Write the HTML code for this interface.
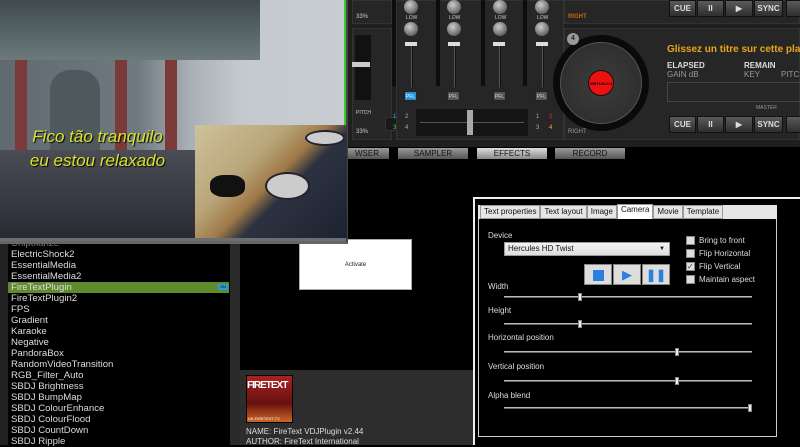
<!DOCTYPE html><html><head><meta charset="utf-8"><style>
*{margin:0;padding:0;box-sizing:border-box}
body{width:800px;height:445px;overflow:hidden;background:#000;position:relative;font-family:"Liberation Sans",sans-serif}
.a{position:absolute}
.list div{height:11px;font-size:9.6px;line-height:11px;color:#ddd;padding-left:3px;white-space:nowrap}
.btn{position:absolute;height:17px;background:linear-gradient(#5a5a5a,#2e2e2e);border:1px solid #111;color:#ddd;font-size:8px;font-weight:bold;text-align:center;line-height:15px}
.knob{position:absolute;width:14px;height:14px;border-radius:50%;background:radial-gradient(circle at 40% 35%,#ccc,#666 70%,#333)}
.fad{position:absolute;width:2px;background:#111;border-left:1px solid #555}
.cap{position:absolute;width:12px;height:4px;background:#ddd}
.pfl{position:absolute;width:13px;height:10px;background:#555;color:#ddd;font-size:5px;line-height:10px;text-align:center;border:1px solid #222}
.lbl{position:absolute;font-size:5px;color:#ccc}
.tab{position:absolute;top:148px;height:11px;background:linear-gradient(#9a9a9a,#555);color:#111;font-size:8px;text-align:center;line-height:11px}
.dl{position:absolute;font-size:8px;color:#ddd}
.sl{position:absolute;left:504px;width:248px;height:2px;background:#bbb;border-bottom:1px solid #666}
.th{position:absolute;width:4px;height:8px;background:#eee;border:1px solid #888;top:-3px}
.cb{position:absolute;left:686px;width:9px;height:9px;background:#ddd;border:1px solid #888}
.dt{position:absolute;font-size:8px;color:#ddd}
</style></head><body>
<div class="a" style="left:345px;top:0;width:455px;height:147px;background:#1f1f1f"></div>
<div class="a" style="left:352px;top:0;width:40px;height:24px;background:#262626;border:1px solid #333"></div>
<div class="a" style="left:352px;top:28px;width:40px;height:112px;background:#262626;border:1px solid #333"></div>
<div class="a" style="left:356px;top:14px;font-size:6px;color:#ccc">33%</div>
<div class="a" style="left:356px;top:129px;font-size:6px;color:#ccc">33%</div>
<div class="a" style="left:356px;top:110px;font-size:5px;color:#ccc">PITCH</div>
<div class="a" style="left:355px;top:35px;width:16px;height:65px;background:#111"></div>
<div class="a" style="left:352px;top:62px;width:18px;height:5px;background:#ccc"></div>
<div class="a" style="left:385px;top:117px;width:28px;height:14px;background:#1a1a1a;border:1px solid #333"></div>
<div class="a" style="left:396px;top:0;width:168px;height:140px;background:#262626;border:1px solid #333"></div>
<div class="a" style="left:564px;top:0;width:236px;height:24px;background:#262626;border:1px solid #333"></div>
<div class="a" style="left:564px;top:28px;width:236px;height:112px;background:#262626;border:1px solid #333"></div>
<div class="knob" style="left:404px;top:0"></div><div class="knob" style="left:447px;top:0"></div><div class="knob" style="left:493px;top:0"></div><div class="knob" style="left:535px;top:0"></div>
<div class="lbl" style="left:406px;top:15px">LOW</div><div class="lbl" style="left:449px;top:15px">LOW</div><div class="lbl" style="left:495px;top:15px">LOW</div><div class="lbl" style="left:537px;top:15px">LOW</div>
<div class="knob" style="left:404px;top:22px"></div><div class="knob" style="left:447px;top:22px"></div><div class="knob" style="left:493px;top:22px"></div><div class="knob" style="left:535px;top:22px"></div>
<div class="fad" style="left:411px;top:45px;height:42px"></div><div class="fad" style="left:454px;top:45px;height:42px"></div><div class="fad" style="left:499px;top:45px;height:42px"></div><div class="fad" style="left:542px;top:45px;height:42px"></div>
<div class="cap" style="left:405px;top:42px"></div><div class="cap" style="left:448px;top:42px"></div><div class="cap" style="left:493px;top:42px"></div><div class="cap" style="left:536px;top:42px"></div>
<div class="a" style="left:392px;top:0;width:4px;height:86px;background:#0d0d0d"></div><div class="a" style="left:436px;top:0;width:4px;height:86px;background:#0d0d0d"></div><div class="a" style="left:481px;top:0;width:4px;height:86px;background:#0d0d0d"></div><div class="a" style="left:523px;top:0;width:4px;height:86px;background:#0d0d0d"></div>
<div class="pfl" style="left:404px;top:91px;background:#2a8fd8;color:#fff">PFL</div><div class="pfl" style="left:447px;top:91px">PFL</div><div class="pfl" style="left:493px;top:91px">PFL</div><div class="pfl" style="left:535px;top:91px">PFL</div>
<div class="a" style="left:416px;top:109px;width:112px;height:27px;background:#151515"></div>
<div class="a" style="left:420px;top:122px;width:104px;height:1px;background:#555"></div>
<div class="a" style="left:467px;top:110px;width:6px;height:25px;background:#aaa"></div>
<div class="a" style="left:393px;top:114px;font-size:6px;color:#3af">1</div><div class="a" style="left:405px;top:114px;font-size:6px;color:#aaa">2</div>
<div class="a" style="left:393px;top:125px;font-size:6px;color:#3d3">3</div><div class="a" style="left:405px;top:125px;font-size:6px;color:#aaa">4</div>
<div class="a" style="left:536px;top:114px;font-size:6px;color:#aaa">1</div><div class="a" style="left:549px;top:114px;font-size:6px;color:#f22">2</div>
<div class="a" style="left:536px;top:125px;font-size:6px;color:#aaa">3</div><div class="a" style="left:549px;top:125px;font-size:6px;color:#fa3">4</div>
<div class="a" style="left:568px;top:14px;font-size:6px;color:#c60;font-weight:bold">RIGHT</div>
<div class="a" style="left:568px;top:129px;font-size:6px;color:#999">RIGHT</div>
<div class="a" style="left:553px;top:35px;width:96px;height:96px;border-radius:50%;background:#0a0a0a"></div>
<div class="a" style="left:560px;top:42px;width:82px;height:82px;border-radius:50%;background:radial-gradient(#3c3c3c,#2a2a2a);border:1px solid #555"></div>
<div class="a" style="left:567px;top:33px;width:12px;height:12px;border-radius:50%;background:#999;color:#222;font-size:7px;font-weight:bold;text-align:center;line-height:12px">4</div>
<div class="a" style="left:588px;top:70px;width:26px;height:26px;border-radius:50%;background:#e11;border:1px solid #111;font-size:4px;color:#000;text-align:center;line-height:26px;font-weight:bold">VIRTUALDJ</div>
<div class="a" style="left:667px;top:44px;font-size:10px;color:#e9a51a;font-weight:bold;white-space:nowrap">Glissez un titre sur cette plat</div>
<div class="a" style="left:667px;top:61px;font-size:8px;color:#ddd;font-weight:bold">ELAPSED</div>
<div class="a" style="left:744px;top:61px;font-size:8px;color:#ddd;font-weight:bold">REMAIN</div>
<div class="a" style="left:667px;top:70px;font-size:8px;color:#999">GAIN dB</div>
<div class="a" style="left:744px;top:70px;font-size:8px;color:#999">KEY</div>
<div class="a" style="left:781px;top:70px;font-size:8px;color:#999">PITC</div>
<div class="a" style="left:667px;top:82px;width:140px;height:20px;border:1px solid #444"></div>
<div class="a" style="left:756px;top:105px;font-size:5px;color:#999">MASTER</div>
<div class="btn" style="left:669px;top:0;width:27px">CUE</div><div class="btn" style="left:697px;top:0;width:27px">II</div><div class="btn" style="left:725px;top:0;width:28px">▶</div><div class="btn" style="left:754px;top:0;width:29px">SYNC</div><div class="btn" style="left:786px;top:0;width:20px"></div>
<div class="btn" style="left:669px;top:116px;width:27px">CUE</div><div class="btn" style="left:697px;top:116px;width:27px">II</div><div class="btn" style="left:725px;top:116px;width:28px">▶</div><div class="btn" style="left:754px;top:116px;width:29px">SYNC</div><div class="btn" style="left:786px;top:116px;width:20px"></div>
<div class="tab" style="left:345px;width:44px">WSER</div>
<div class="tab" style="left:398px;width:70px">SAMPLER</div>
<div class="tab" style="left:477px;width:70px;background:linear-gradient(#ddd,#888)">EFFECTS</div>
<div class="tab" style="left:555px;width:70px">RECORD</div>
<div class="a" style="left:0;top:238px;width:8px;height:207px;background:#222"></div>
<div class="a" style="left:230px;top:238px;width:10px;height:207px;background:#2a2a2a"></div>
<div class="a list" style="left:8px;top:238px;width:221px">
<div style="color:#777">Unipolarize</div><div>ElectricShock2</div><div>EssentialMedia</div><div>EssentialMedia2</div>
<div style="background:#5f8a2e;position:relative">FireTextPlugin<span style="position:absolute;right:1px;top:2px;width:10px;height:6px;background:#28a0d0;font-size:4px;line-height:6px;color:#000;text-align:center">ON</span></div>
<div>FireTextPlugin2</div><div>FPS</div><div>Gradient</div><div>Karaoke</div><div>Negative</div><div>PandoraBox</div><div>RandomVideoTransition</div><div>RGB_Filter_Auto</div><div>SBDJ Brightness</div><div>SBDJ BumpMap</div><div>SBDJ ColourEnhance</div><div>SBDJ ColourFlood</div><div>SBDJ CountDown</div><div>SBDJ Ripple</div></div>
<div class="a" style="left:240px;top:370px;width:233px;height:75px;background:#2d2d2d"></div>
<div class="a" style="left:246px;top:375px;width:47px;height:48px;background:linear-gradient(#a22,#611 60%,#c62);border:1px solid #000"></div>
<div class="a" style="left:247px;top:380px;font-size:10px;color:#fff;font-weight:bold;letter-spacing:-1px">FIRETEXT</div>
<div class="a" style="left:248px;top:416px;font-size:4px;color:#fff">UK.FIRETEXT.TV</div>
<div class="a" style="left:246px;top:427px;font-size:8px;color:#ddd;white-space:nowrap">NAME: FireText VDJPlugin v2.44</div>
<div class="a" style="left:246px;top:437px;font-size:8px;color:#ddd;white-space:nowrap">AUTHOR: FireText International</div>
<div class="a" style="left:299px;top:239px;width:113px;height:51px;background:#fff;border:1px solid #aaa;font-size:6px;text-align:center;line-height:50px;color:#222">Activate</div>
<div class="a" style="left:0;top:0;width:348px;height:244px;background:#6a6f75;border-right:2px solid #444;border-bottom:3px solid #666"></div>
<div class="a" style="left:0;top:0;width:345px;height:238px;background:linear-gradient(90deg,#5e6a70 0,#6f7a80 40%,#a9b0b5 55%,#c4c9cd 70%,#c8cdd1 100%)"></div>
<div class="a" style="left:0;top:0;width:260px;height:60px;background:linear-gradient(#3e4a4c,#6d7a7c)"></div>
<div class="a" style="left:15px;top:60px;width:12px;height:90px;background:#7a3a3a"></div>
<div class="a" style="left:115px;top:60px;width:12px;height:90px;background:#7a3a3a"></div>
<div class="a" style="left:165px;top:60px;width:12px;height:90px;background:#7a3a3a"></div>
<div class="a" style="left:50px;top:70px;width:50px;height:80px;background:#4f585d;border-radius:20px 20px 0 0"></div>
<div class="a" style="left:0;top:150px;width:195px;height:88px;background:linear-gradient(#4a4d55,#2a2a33)"></div>
<div class="a" style="left:0;top:125px;width:195px;font-size:17px;font-style:italic;color:#d9e22a;text-align:center;line-height:24px;text-shadow:1px 1px 1px #000">Fico tão tranquilo<br>eu estou relaxado</div>
<div class="a" style="left:195px;top:125px;width:152px;height:113px;background:linear-gradient(135deg,#cfc29a 0,#b9a57a 35%,#a07a48 50%,#2c3240 60%,#1d2230 100%)"></div>
<div class="a" style="left:305px;top:130px;width:40px;height:16px;border-radius:50%;background:#ccc;border:2px solid #223"></div>
<div class="a" style="left:265px;top:172px;width:45px;height:28px;border-radius:50%;background:#ccc;border:2px solid #223"></div>
<div class="a" style="left:210px;top:175px;width:35px;height:22px;border-radius:40%;background:#111"></div>
<div class="a" style="left:344px;top:0;width:2px;height:125px;background:#3c3"></div>
<div class="a" style="left:473px;top:197px;width:327px;height:248px;border:2px solid #eee;border-right:none;border-bottom:none;background:#000"></div>
<div class="a" style="left:478px;top:218px;width:299px;height:219px;border:1px solid #ccc;background:#000"></div>
<div class="a" style="left:478px;top:205px;width:299px;height:14px;background:#e6e6e6"></div>
<div class="a" style="left:480px;top:205px;font-size:8px;color:#111;display:flex">
<span style="border:1px solid #999;padding:1px 3px;height:14px">Text properties</span><span style="border:1px solid #999;padding:1px 3px">Text layout</span><span style="border:1px solid #999;padding:1px 3px">Image</span><span style="border:1px solid #999;border-bottom:none;padding:0 3px;background:#fff;height:15px;margin-top:-1px">Camera</span><span style="border:1px solid #999;padding:1px 3px">Movie</span><span style="border:1px solid #999;padding:1px 3px">Template</span></div>
<div class="dl" style="left:488px;top:231px">Device</div>
<div class="a" style="left:504px;top:242px;width:166px;height:14px;background:linear-gradient(#f4f4f4,#ddd);border:1px solid #999;font-size:8px;line-height:12px;padding-left:3px;color:#111">Hercules HD Twist<span style="position:absolute;right:4px;font-size:6px">▼</span></div>
<div class="a" style="left:584px;top:264px;width:28px;height:21px;background:#ddd;border:1px solid #888"><div style="margin:5px 8px;width:11px;height:11px;background:#2a7fe0"></div></div>
<div class="a" style="left:613px;top:264px;width:28px;height:21px;background:#ddd;border:1px solid #888;color:#2a7fe0;font-size:13px;text-align:center;line-height:20px">▶</div>
<div class="a" style="left:642px;top:264px;width:28px;height:21px;background:#ddd;border:1px solid #888;color:#2a7fe0;font-size:12px;font-weight:bold;text-align:center;line-height:20px">❚❚</div>
<div class="cb" style="top:236px"></div><div class="dt" style="left:699px;top:236px">Bring to front</div>
<div class="cb" style="top:249px"></div><div class="dt" style="left:699px;top:249px">Flip Horizontal</div>
<div class="cb" style="top:262px;font-size:8px;line-height:7px;color:#247">✓</div><div class="dt" style="left:699px;top:262px">Flip Vertical</div>
<div class="cb" style="top:275px"></div><div class="dt" style="left:699px;top:275px">Maintain aspect</div>
<div class="dl" style="left:488px;top:282px">Width</div><div class="sl" style="top:296px"><div class="th" style="left:74px"></div></div>
<div class="dl" style="left:488px;top:306px">Height</div><div class="sl" style="top:323px"><div class="th" style="left:74px"></div></div>
<div class="dl" style="left:488px;top:333px">Horizontal position</div><div class="sl" style="top:351px"><div class="th" style="left:171px"></div></div>
<div class="dl" style="left:488px;top:362px">Vertical position</div><div class="sl" style="top:380px"><div class="th" style="left:171px"></div></div>
<div class="dl" style="left:488px;top:391px">Alpha blend</div><div class="sl" style="top:407px"><div class="th" style="left:244px"></div></div>
</body></html>
